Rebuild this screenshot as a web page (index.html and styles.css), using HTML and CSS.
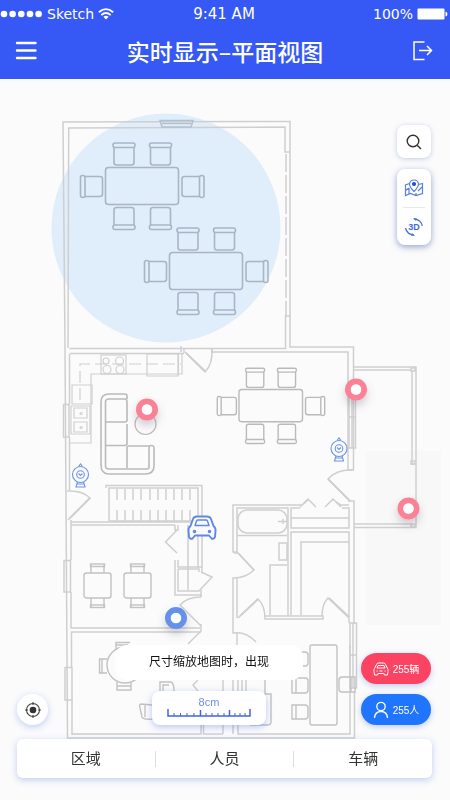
FILE: index.html
```
<!DOCTYPE html>
<html lang="zh-CN">

<head>
    <meta charset="UTF-8">
    <meta name="viewport" content="width=device-width, initial-scale=1.0">
    <title>实时显示–平面视图</title>
    <link rel="stylesheet" href="styles.css">
</head>

<body>
    <header class="header">
        <div class="status-bar">
            <div class="status-left">
                <svg width="43" height="8" viewBox="0 0 43 8" fill="#fff">
                    <circle cx="4" cy="4" r="3.3" />
                    <circle cx="12.6" cy="4" r="3.3" />
                    <circle cx="21.3" cy="4" r="3.3" />
                    <circle cx="30" cy="4" r="3.3" />
                    <circle cx="38.6" cy="4" r="3.3" />
                </svg>
                <span>Sketch</span>
                <svg width="16" height="12" viewBox="0 0 16 12" fill="none" stroke="#fff" stroke-width="1.8">
                    <path d="M0.8 4.2Q8 -2 15.2 4.2M3.3 7Q8 3 12.7 7" />
                    <path d="M5.4 8.8Q8 6.8 10.6 8.8L8 11.6z" fill="#fff" stroke="none" />
                </svg>
            </div>
            <span class="status-time">9:41 AM</span>
            <div class="status-right">
                <span>100%</span>
                <svg width="31" height="12" viewBox="0 0 31 12">
                    <rect x="0.5" y="0.5" width="27" height="11" rx="1" fill="#fff" />
                    <path d="M28.5 3.5q2 0.5 2 2.5t-2 2.5z" fill="#fff" />
                </svg>
            </div>
        </div>
        <div class="title-bar">
            <button class="icon-btn" aria-label="菜单">
                <svg width="22" height="20" viewBox="0 0 22 20" stroke="#fff" stroke-width="2.4" stroke-linecap="round">
                    <path d="M2 2H20.5M2 9.5H20.5M2 17H20.5" />
                </svg>
            </button>
            <h1>实时显示–平面视图</h1>
            <button class="icon-btn" aria-label="退出">
                <svg width="20" height="20" viewBox="0 0 20 20" fill="none" stroke="#fff" stroke-width="1.5">
                    <path d="M11.500 1H1V18.500H11.500M6 9.500H18.500M14 5L18.500 9.500L14 14" />
                </svg>
            </button>
        </div>
    </header>

    <main class="map">
        <svg class="floor-plan" viewBox="0 79 450 721" preserveAspectRatio="xMidYMin meet" fill="none">
            <defs>
                <!-- chair seen from above, back at the top -->
                <g id="chair">
                    <path d="M1 4.500V19.500Q1 22 3.500 22H18.500Q21 22 21 19.500V4.500" />
                    <rect x="0" y="0" width="22" height="4.500" rx="2" />
                </g>
                <g id="dining">
                    <rect x="0" y="0" width="73" height="37" rx="3" />
                    <use href="#chair" x="7.500" y="-24.500" />
                    <use href="#chair" x="44" y="-24.500" />
                    <use href="#chair" transform="translate(29.500 62) rotate(180)" />
                    <use href="#chair" transform="translate(66 62) rotate(180)" />
                    <use href="#chair" transform="translate(-25 30) rotate(-90)" />
                    <use href="#chair" transform="translate(98.500 8) rotate(90)" />
                </g>
                <g id="desk">
                    <rect x="0" y="9" width="27" height="25" rx="2.5" />
                    <path d="M7 1V9M20 1V9M7 34V43M20 34V43" />
                    <rect x="6.500" y="0" width="14" height="2.500" />
                    <rect x="6.500" y="41" width="14" height="2.500" />
                </g>
                <g id="pin">
                    <circle r="8" stroke-width="6" />
                    <circle r="5.300" fill="#fff" stroke="none" />
                </g>
                <g id="camera" stroke="#6c93e6" stroke-width="1.100">
                    <circle r="8" />
                    <circle r="3.800" />
                    <path d="M-2 -8L0 -10.500L2 -8M-2 -1L0 1L2 -1M-3 7.500L-4.500 12.500H4.500L3 7.500M-3.500 9.500H3.500" />
                </g>
                <filter id="pinShadow" x="-50%" y="-50%" width="200%" height="220%">
                    <feDropShadow dx="0" dy="5" stdDeviation="4" flood-color="#667" flood-opacity="0.3" />
                </filter>
            </defs>

            <path d="M366 451H441V625H366z" fill="#f8f8f8" />
            <circle cx="166" cy="228" r="114.500" fill="#e0edfa" />

            <!-- walls -->
            <g stroke="#cfcfcf" stroke-width="1.500">
                <path d="M65 348L63 122L290 121.500V347H353.500V470M68 348L68.700 128L285 127V152H290M69.500 348.500H285.500V316H290" />
                <path d="M286 154V316" stroke-dasharray="18 3" />
                <path d="M160 120.500H193L191 127H162z" stroke="#b3c1cf" />
                <path d="M162 123.500H191" stroke="#b3c1cf" />
                <path d="M65 348L67.500 738H354.500V692M69.500 353.500V404M69.500 437V490M70 353.500H184M212 352H348V470" />
                <path d="M63.500 404.500H69V437H63.500zM64 560.500H70.500V592H64zM65 667.500H72V700H65z" />
                <path d="M71 520V560M71 592V628H200M71 525H175M71 522H198M71.500 667V632H201M72 700V734H201V725M203.500 725V734H223M233 725V734M238 725V734H350V692" />
                <!-- doors -->
                <path d="M185 352L205 372Q213 364 212 348" />
                <path d="M67 491Q82 490 90 498L68 520M353 470Q337 469 328 479L350 501" />
                <path d="M186 353L205 371M328 479L350 501M90 498L70 518" stroke-width="1.800" />
                <path d="M181 346V352M184 348V353M212 348V353M348 501H354V624M348 470H354" />
                <!-- right terrace -->
                <path d="M354 367H416V527.500H354M354 370H412M412 370V464H415M412 524H354M412 524V527" />
                <path d="M411 368h4v3h-4zM411 461h4v3h-4zM411 524h4v3h-4z" />
                <path d="M349 393V448M352 393V448M355.500 400V448H348M349 417H355" />
                <!-- stairs -->
                <path d="M109 521V488H198V568M106 488V485.500H202V572M109 521H198" />
                <path d="M117 489V500M125 489V500M133 489V500M141 489V500M150 489V500M158 489V500M166 489V500M174 489V500M182 489V500M190 489V500M117 510V521M125 510V521M133 510V521M141 510V521M150 510V521M158 510V521M166 510V521M174 510V521M182 510V521M190 510V521" />
                <!-- closet -->
                <path d="M175 525V530H178V525M177 530L165.500 542L177 553M188 525V590M175 560V595H201V597M178 560V567H202M178 569H199V572M178 569V591H199L212 577L201 572" />
                <path d="M201 597Q187 597 180 605L201 626M201 624V631L188 644M201 597V590" />
                <!-- bathroom -->
                <path d="M302 505H233V552H237V508H288V616M300 508H291V528H349V508H342M349 518H291M302 505L308 499L316 507M300 507L308 500M325 507L333 499L341 507M332 499L341 505H349" />
                <rect x="238" y="510" width="49" height="23" rx="9" />
                <path d="M237 535.500H287M278 521.500H287M283 519V524M291 615V532H349V617M301 615V542H349M279 543H287V560H279zM270 615V565H287" />
                <path d="M234 553H238L254 570Q246 578 233 578V633Q246 631 256 642M237 578V618M238 618L258 599Q265 605 265 619H323V616H265M322 616Q322 604 328 598L349 618V623" />
                <path d="M238 553L254 570M240 616L258 599M329 598L349 617" stroke-width="1.800" />
                <path d="M350 623H356.500V688H350zM353 623V688M350 655H356" />
                <path d="M237 633V645M350 692V645M223 680V734M238 680V693M242 680V693M246 680V693M233 680V693M198 680L193 685L198 691" />
            </g>

            <!-- kitchen -->
            <g stroke="#d0d0d0" stroke-width="1.200">
                <path d="M182 354V374H91V443H70M178.500 354V374" />
                <path d="M80 400V364H181" stroke-dasharray="12 5" />
                <rect x="101" y="355" width="25" height="19" />
                <circle cx="106" cy="361" r="3" />
                <circle cx="119.500" cy="361" r="4" />
                <circle cx="107" cy="369.500" r="4" />
                <circle cx="120" cy="369.500" r="4" />
                <path d="M147 354H178V376H147zM72 385H92V404H72z" />
                <path d="M71 406H90V434H71zM74 408H87V418H74zM74 422H87V432H74z" />
                <circle cx="81" cy="413.500" r="1" />
                <circle cx="81" cy="427.500" r="1" />
            </g>

            <!-- furniture -->
            <g stroke="#a8b5c5" stroke-width="1.600">
                <use href="#dining" x="105.500" y="167.500" />
                <use href="#dining" x="169.500" y="252.500" />
            </g>
            <g stroke="#bababa" stroke-width="1.600">
                <use href="#dining" transform="translate(239 389.500) scale(0.87)" />
                <path d="M127 399V396Q127 394 125 394H109Q101 394 101 402V465Q101 474 109 474H145Q154 474 154 466V448Q154 445 150.500 445.500Q149 446 149 449V467Q149 469 147 469H109Q105.500 469 105.500 466V402Q105.500 399 109 399H125Q127 399 127 402V420Q127 422 125 422H106M127 424V443Q127 445.500 125 445.500H106M127 468V448Q127 446 129 446H149" />
                <circle cx="145.500" cy="424" r="10.500" stroke-width="1.200" />
            </g>
            <g stroke="#c2c2c2" stroke-width="1.400">
                <use href="#desk" x="84" y="564" />
                <use href="#desk" x="124" y="564" />
                <circle cx="125" cy="665" r="18" />
                <path d="M107 659H99.500V673H107M102 659V673M116 649V642.500H130M116 645H128M117 682V690H131V682M117 686H131" />
                <path d="M160 691V682H171Q174 683 174 691M163 691V685H169M152 705L141 704Q139 704 140 708L142 717Q143 720 154 719M145 705V717" />
                <rect x="310" y="645" width="27" height="80" rx="2" />
                <path d="M292 652H305Q308 652 308 655V663Q308 666 305 666H292zM296 652V666M292 678H305Q308 678 308 681V690Q308 693 305 693H292zM296 678V693M292 705H305Q308 705 308 708V716Q308 719 305 719H292zM296 705V719" />
                <path d="M355 677H342Q339 677 339 680V689Q339 692 342 692H355zM351 677V692M265 680V694H271V722Q271 725 267 725H250" />
            </g>

            <!-- cameras, car and people -->
            <use href="#camera" x="80.500" y="474.500" />
            <use href="#camera" x="339" y="448.500" />
            <g stroke="#5f87e8" stroke-width="1.900" stroke-linejoin="round" fill="#fafafa">
                <path d="M190.500 526L193 519Q194 516.500 197 516.500H207Q210 516.500 211 519L213.500 526Q216 528 215.500 531L215 537Q214 539.500 211.500 538.500L209 535.500H195L192.500 538.500Q190 539.500 189 537L188.500 531Q188 528 190.500 526z" />
                <path d="M195 525.500L196.500 521Q197 520 198 520H206Q207 520 207.500 521L209 525.500z" stroke-width="1.400" />
                <circle cx="194.500" cy="531.500" r="1" stroke-width="1.600" />
                <circle cx="209.500" cy="531.500" r="1" stroke-width="1.600" />
            </g>
            <g filter="url(#pinShadow)" stroke="#fb8295">
                <use href="#pin" x="147" y="409.500" />
                <use href="#pin" x="356" y="389.500" />
                <use href="#pin" x="408.500" y="508.500" />
                <use href="#pin" x="176" y="618" stroke="#6691ea" />
            </g>
        </svg>

        <div class="tools">
            <button class="tool-btn" aria-label="搜索">
                <svg width="16" height="16" viewBox="0 0 16 16" fill="none" stroke="#333" stroke-width="1.400">
                    <circle cx="7" cy="7" r="5.800" />
                    <path d="M11.200 11.200L15 15" />
                </svg>
            </button>
            <div class="tool-group">
                <button aria-label="地图">
                    <svg width="20" height="18" viewBox="0 0 20 18" fill="none" stroke="#5c7fe0" stroke-width="1.200">
                        <path d="M5.500 4.500L1.500 6V16.500L6.500 14.500L12 16.500L18.500 14.500V4.500L14.500 5.500M1.500 11.500L5 9M5 14.500V9M14 12L18 8M12 16V14" />
                        <path d="M10 12.500Q5.500 8 5.500 5Q6 1 10 1T14.500 5Q14.500 8 10 12.500z" fill="#fff" />
                        <circle cx="10" cy="5" r="1.500" fill="#2850d0" stroke="#2850d0" />
                    </svg>
                </button>
                <button aria-label="三维视图">
                    <svg width="20" height="20" viewBox="0 0 20 20" fill="none" stroke="#4f74dc" stroke-width="1.300">
                        <path d="M10 1.800Q17 2.500 18.300 9M1.500 11Q3 17.500 10 18" />
                        <path d="M9 1L13 1.500L12 4zM11 19L7 18.500L8 16z" fill="#4f74dc" stroke="none" />
                        <text x="10" y="13" text-anchor="middle">3D</text>
                    </svg>
                </button>
            </div>
        </div>

        <div class="bottom">
            <div class="controls">
                <button class="locate" aria-label="定位">
                    <svg width="18" height="18" viewBox="0 0 18 18" fill="none" stroke="#444" stroke-width="1.100">
                        <circle cx="9" cy="9" r="6.500" />
                        <circle cx="9" cy="9" r="3.300" fill="#333" stroke="none" />
                        <path d="M9 1V4M9 14V17M1 9H4M14 9H17" />
                    </svg>
                </button>
                <div class="scale-column">
                    <p class="hint">尺寸缩放地图时，出现</p>
                    <div class="scale">
                        <span>8cm</span>
                        <svg width="84" height="8" viewBox="0 0 84 8" fill="none" stroke="#4065e0" stroke-width="1.500">
                            <path d="M1 0V7H83V0M33.500 1V7M62.500 1V7" />
                            <path d="M7 4V7M13.500 4V7M20 4V7M27 4V7M39 4V7M45 4V7M51 4V7M57 4V7M68 4V7M73 4V7M78 4V7" stroke-width="1" />
                        </svg>
                    </div>
                </div>
                <div class="counts">
                    <button class="count count-car">
                        <svg width="16" height="14" viewBox="0 0 16 14" fill="none" stroke="#fff">
                            <path d="M1.500 6.500L3.500 2.500Q4 1 5.500 1H10.500Q12 1 12.500 2.500L14.500 6.500Q15.500 7.500 15 9.500L14.500 13H11.500L11 11.500H5L4.500 13H1.500L1 9.500Q0.500 7.500 1.500 6.500zM4 6H12L11 3.500H5zM4 8.500V9.500M12 8.500V9.500M6.500 9H9.500" />
                        </svg>
                        255辆
                    </button>
                    <button class="count count-person">
                        <svg width="16" height="18" viewBox="0 0 16 18" fill="none" stroke="#fff" stroke-width="1.300">
                            <circle cx="8" cy="5.500" r="4.200" />
                            <path d="M1.500 17Q2 10.500 8 10.500T14.500 17" />
                        </svg>
                        255人
                    </button>
                </div>
            </div>
            <nav class="dock">
                <a href="#area">区域</a>
                <a href="#people">人员</a>
                <a href="#cars">车辆</a>
            </nav>
        </div>
    </main>
</body>

</html>
```

FILE: styles.css
```
* {
    box-sizing: border-box;
}

body {
    margin: 0;
    min-height: 100vh;
    display: flex;
    flex-direction: column;
    background-color: #fbfbfc;
    font-family: "Liberation Sans", "Noto Sans CJK SC", sans-serif;
    color: #333;
}

button {
    margin: 0;
    padding: 0;
    border: none;
    background: none;
    font-family: inherit;
    cursor: pointer;
}

svg {
    display: block;
}

.header {
    height: 79px;
    background-color: #3659f6;
    color: #fff;
}

.status-bar {
    display: grid;
    grid-template-columns: 1fr auto 1fr;
    align-items: center;
    height: 28px;
    padding-right: 2px;
    font-family: "DejaVu Sans", sans-serif;
    font-size: 14px;
}

.status-time {
    font-size: 15px;
}

.status-left,
.status-right {
    display: flex;
    align-items: center;
    gap: 4px;
}

.status-right {
    justify-content: flex-end;
}

.title-bar {
    display: flex;
    align-items: center;
    justify-content: space-between;
    height: 46px;
    padding: 0 17px 0 15px;
}

.title-bar h1 {
    margin: 0;
    font-size: 23px;
    font-weight: 500;
    line-height: 32px;
    font-family: "Noto Sans CJK SC", sans-serif;
}

.map {
    position: relative;
    flex: 1;
    display: flex;
    flex-direction: column;
    justify-content: space-between;
    padding: 46px 18px 22px 17px;
}

.floor-plan {
    position: absolute;
    top: 0;
    left: 0;
    width: 100%;
    height: 100%;
}

.tools,
.bottom {
    position: relative;
}

.tools {
    display: flex;
    flex-direction: column;
    align-items: flex-end;
    gap: 11px;
    padding-right: 1px;
}

.tool-btn,
.tool-group button,
.locate {
    display: flex;
    align-items: center;
    justify-content: center;
}

.tool-btn,
.tool-group {
    width: 34px;
    border-radius: 8px;
    background-color: #fff;
}

.tool-btn {
    height: 33px;
    box-shadow: 0 1px 5px rgba(80, 100, 160, 0.3);
}

.tool-group {
    padding: 0 6px;
    box-shadow: 0 2px 6px rgba(50, 80, 160, 0.5);
}

.tool-group button {
    width: 100%;
    height: 38px;
}

.tool-group button + button {
    border-top: 1px solid #e8e8e8;
}

.tool-group text {
    fill: #4468d8;
    stroke: none;
    font-size: 9px;
    font-weight: bold;
}

.controls {
    display: grid;
    grid-template-columns: 40px 1fr 70px;
    align-items: end;
    margin-bottom: 14px;
    padding-right: 1px;
}

.locate {
    width: 31px;
    height: 31px;
    border-radius: 50%;
    background-color: #fff;
    box-shadow: 0 2px 7px rgba(60, 100, 220, 0.3);
}

.scale-column {
    display: flex;
    flex-direction: column;
    align-items: center;
    gap: 11px;
}

.hint {
    margin: 0;
    padding: 0 34px;
    border-radius: 12px;
    background-color: #fff;
    color: #111;
    font-size: 12px;
    line-height: 35px;
}

.scale {
    display: flex;
    flex-direction: column;
    align-items: center;
    width: 114px;
    height: 34px;
    padding-top: 5px;
    border-radius: 8px;
    background-color: #fff;
    box-shadow: 0 2px 7px rgba(60, 100, 220, 0.35);
    color: #6d8df0;
    font-size: 11px;
    line-height: 13px;
}

.counts {
    display: flex;
    flex-direction: column;
    gap: 10px;
}

.count {
    display: flex;
    align-items: center;
    justify-content: center;
    gap: 4px;
    height: 31px;
    border-radius: 16px;
    color: #fff;
    font-size: 10px;
    box-shadow: 0 2px 6px rgba(60, 100, 220, 0.3);
}

.count-car {
    background-color: #fd4362;
}

.count-person {
    background-color: #1f75fe;
}

.dock {
    display: flex;
    align-items: center;
    height: 39px;
    border-radius: 6px;
    background-color: #fff;
    box-shadow: 0 2px 7px rgba(60, 100, 220, 0.3);
}

.dock a {
    flex: 1;
    color: #333;
    font-size: 15px;
    line-height: 16px;
    text-align: center;
    text-decoration: none;
}

.dock a + a {
    border-left: 1px solid #ddd;
}
```
